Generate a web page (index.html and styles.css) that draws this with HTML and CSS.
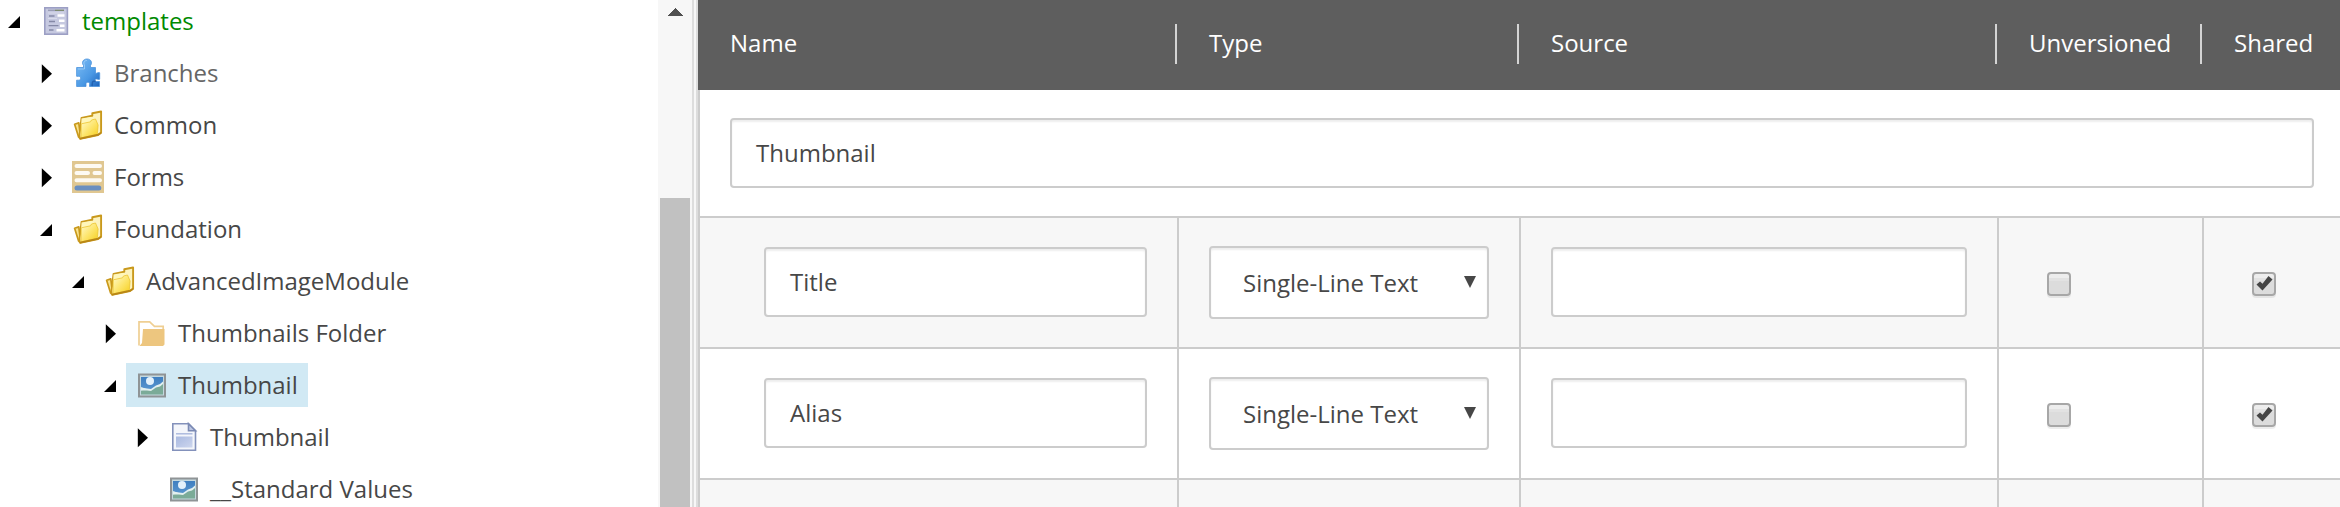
FILE: index.html
```html
<!DOCTYPE html>
<html lang="en">
<head>
<meta charset="utf-8">
<title>Template builder</title>
<link rel="stylesheet" href="styles.css">
</head>
<body>
<svg class="defs" aria-hidden="true">
  <defs>
    <linearGradient id="gBlue" x1="0" y1="0" x2="1" y2="1"><stop offset="0" stop-color="#7dbdf5"/><stop offset=".6" stop-color="#4a98e4"/><stop offset="1" stop-color="#1c63bd"/></linearGradient>
    <linearGradient id="gGold" x1="0" y1="0" x2="1" y2="1"><stop offset="0" stop-color="#fffbd0"/><stop offset=".5" stop-color="#fde670"/><stop offset="1" stop-color="#f6cf1c"/></linearGradient>
    <linearGradient id="gSky" x1="0" y1="0" x2="0" y2="1"><stop offset="0" stop-color="#3f7fc0"/><stop offset="1" stop-color="#5a97d0"/></linearGradient>
    <linearGradient id="gDoc" x1="0" y1="0" x2="1" y2="1"><stop offset="0" stop-color="#a9b9e0"/><stop offset="1" stop-color="#cdd6ee"/></linearGradient>
  </defs>
  <symbol id="template" viewBox="0 0 32 32">
    <rect x="4.8" y="2.8" width="22.6" height="26.4" fill="#c6c9e0" stroke="#9c9fc4" stroke-width="1.6"/>
    <path d="M8 5.3h7" stroke="#9a9db5" stroke-width="1.4"/><path d="M15 5.3h9" stroke="#7e8b70" stroke-width="1.4"/>
    <path d="M9 11h5.500M9 16.500h6M8.500 20.700h10M9 25h4.500" stroke="#8589a6" stroke-width="1.3"/>
    <path d="M17.500 10.500h7M19 15.700h5.500M20 20.700h4.500M16.500 25.300h8" stroke="#fff" stroke-width="2.6"/>
    <path d="M8 8h16M8 13.500h9" stroke="#d9dbea" stroke-width="1.2"/>
  </symbol>
  <symbol id="puzzle" viewBox="0 0 32 32">
    <path d="M4.600 10.500H11.500V8.500C9.300 5.800 10.800 2 15 2s5.700 3.800 3.500 6.500v2H23.500V16c1.500.8 2.500-1 4.200-.2v6.400c-1.700.8-2.700-.8-4.200 0-1 .8-.6 2.300.8 2.300h3.200v5H17.500v-2.200c1-2.800-4-2.800-3.500 0v2.200H4.600v-6.300h1.800c3 .6 3-4.400 0-3.900H4.600z" fill="url(#gBlue)" stroke="#4b93dc" stroke-width=".8"/>
    <path d="M6 12h6.500V8c-1.500-2.500 0-4.500 2.500-4.500" fill="none" stroke="#a8d4fb" stroke-width="1" opacity=".7"/>
    <path d="M20 29c1-4-1-4.500 4-5" fill="none" stroke="#15509f" stroke-width="1.500" opacity=".6"/>
  </symbol>
  <symbol id="folders" viewBox="0 0 32 32">
    <path d="M2.600 15.200l4.200-1.300L8.500 28 8 29.500 6.600 28z" fill="#fae58f" stroke="#c9991c" stroke-width="1.700" stroke-linejoin="round"/>
    <path d="M9.500 9l10.800-2.200V4.200l8.800-1.700V23.800L26 26 8.200 29.700 7.500 26z" fill="#fdf3bd" stroke="#c9991c" stroke-width="1.900" stroke-linejoin="round"/>
    <path d="M9.500 9.500L19.500 7.800l3.500 4 3 13.400L8.500 29z" fill="#fff7bb"/>
    <path d="M9.300 14.800l9.200-2 1-1.800 4-1 2.600 6-.8 9.500L9 28.800z" fill="url(#gGold)" stroke="#ecc531" stroke-width=".8"/>
    <path d="M8 29.600L26.200 25.700l2.800-2" fill="none" stroke="#b98716" stroke-width="1.900"/>
  </symbol>
  <symbol id="forms" viewBox="0 0 32 32">
    <rect width="32" height="32" fill="#e0c791"/>
    <path d="M4.500 5h23.500M4.500 12h11.500M22.500 12h5.500M4.500 19.200h23.500" stroke="#fdfaf3" stroke-width="4" stroke-linecap="round"/>
    <path d="M5 27h21.800" stroke="#6a8fc0" stroke-width="5" stroke-linecap="round"/>
  </symbol>
  <symbol id="folder" viewBox="0 0 32 32">
    <path d="M3 28.500V4.800h10.700l4.800 4.500h8.700V12" fill="#fff" stroke="#efcf93" stroke-width="1.700"/>
    <path d="M7 12h21.500v15.500l-1.500 1.500H3.500L6 26z" fill="#edc67f"/>
  </symbol>
  <symbol id="image" viewBox="0 0 32 32">
    <rect x="3" y="5.500" width="26" height="22" fill="#c4d8de" stroke="#8f9496" stroke-width="2"/>
    <path d="M5 8H27V15L15 22 5 18z" fill="url(#gSky)"/>
    <circle cx="14" cy="12" r="4" fill="#e3f1fb"/>
    <path d="M5 21.500l6-1.500 5 1 11-6.500V25.500H5z" fill="#7bab98"/>
    <path d="M5 18.500l6 1 4 .500 5-3.500 4-1.500 3-2.500v2.500l-3 2.500-4 1-5 3.500-4-.5H5z" fill="#e3f0ef"/>
  </symbol>
  <symbol id="document" viewBox="0 0 32 32">
    <path d="M4.800 2.800H20.500L27.500 9.800V29.200H4.800z" fill="#f4f6fb" stroke="#8391bb" stroke-width="1.600"/>
    <path d="M20.500 2.800V9.800H27.500z" fill="#bcc6e2" stroke="#7b8ab4" stroke-width="1.600"/>
    <path d="M8 12.800H24.500" stroke="#a9b7dc" stroke-width="1.400"/>
    <rect x="8" y="15.500" width="16.500" height="11" fill="url(#gDoc)"/>
  </symbol>
  <symbol id="open" viewBox="0 0 12 20"><path d="M12.500 3.500v12.500H0z"/></symbol>
  <symbol id="closed" viewBox="0 0 12 20"><path d="M1.800 .300L12 9.800 1.800 19.300z"/></symbol>
</svg>
<div class="app">
  <nav class="tree">
    <div class="node level-0"><svg class="toggle"><use href="#open"/></svg><span class="item"><svg class="icon"><use href="#template"/></svg><span class="label root">templates</span></span></div>
    <div class="node level-1"><svg class="toggle"><use href="#closed"/></svg><span class="item"><svg class="icon"><use href="#puzzle"/></svg><span class="label muted">Branches</span></span></div>
    <div class="node level-1"><svg class="toggle"><use href="#closed"/></svg><span class="item"><svg class="icon"><use href="#folders"/></svg><span class="label">Common</span></span></div>
    <div class="node level-1"><svg class="toggle"><use href="#closed"/></svg><span class="item"><svg class="icon"><use href="#forms"/></svg><span class="label">Forms</span></span></div>
    <div class="node level-1"><svg class="toggle"><use href="#open"/></svg><span class="item"><svg class="icon"><use href="#folders"/></svg><span class="label">Foundation</span></span></div>
    <div class="node level-2"><svg class="toggle"><use href="#open"/></svg><span class="item"><svg class="icon"><use href="#folders"/></svg><span class="label">AdvancedImageModule</span></span></div>
    <div class="node level-3"><svg class="toggle"><use href="#closed"/></svg><span class="item"><svg class="icon"><use href="#folder"/></svg><span class="label">Thumbnails Folder</span></span></div>
    <div class="node level-3"><svg class="toggle"><use href="#open"/></svg><span class="item selected"><svg class="icon"><use href="#image"/></svg><span class="label">Thumbnail</span></span></div>
    <div class="node level-4"><svg class="toggle"><use href="#closed"/></svg><span class="item"><svg class="icon"><use href="#document"/></svg><span class="label">Thumbnail</span></span></div>
    <div class="node level-4"><svg class="toggle"></svg><span class="item"><svg class="icon"><use href="#image"/></svg><span class="label">__Standard Values</span></span></div>
  </nav>
  <div class="scrollbar">
    <svg class="scroll-up" viewBox="0 0 16 8" shape-rendering="crispEdges"><path d="M8 0l8 8H0z"/></svg>
    <div class="thumb"></div>
  </div>
  <div class="splitter"></div>
  <main class="builder">
    <div class="head columns">
      <div class="th">Name</div><div class="th">Type</div><div class="th">Source</div><div class="th">Unversioned</div><div class="th">Shared</div>
    </div>
    <div class="section"><div class="field">Thumbnail</div></div>
    <div class="row columns shaded">
      <div class="td name"><div class="field">Title</div></div>
      <div class="td"><div class="field select"><span>Single-Line Text</span><svg class="caret" viewBox="0 0 12 12"><path d="M0 0h12L6 12z"/></svg></div></div>
      <div class="td"><div class="field"></div></div>
      <div class="td check"><span class="box"></span></div>
      <div class="td check"><span class="box"><svg class="tick" viewBox="0 0 20 20"><path d="M2.500 10.500l6 6L18.500 5.500 14.500 2 8.500 9.800 6 7.500z"/></svg></span></div>
    </div>
    <div class="row columns">
      <div class="td name"><div class="field">Alias</div></div>
      <div class="td"><div class="field select"><span>Single-Line Text</span><svg class="caret" viewBox="0 0 12 12"><path d="M0 0h12L6 12z"/></svg></div></div>
      <div class="td"><div class="field"></div></div>
      <div class="td check"><span class="box"></span></div>
      <div class="td check"><span class="box"><svg class="tick" viewBox="0 0 20 20"><path d="M2.500 10.500l6 6L18.500 5.500 14.500 2 8.500 9.800 6 7.500z"/></svg></span></div>
    </div>
    <div class="row columns shaded">
      <div class="td"></div><div class="td"></div><div class="td"></div><div class="td"></div><div class="td"></div>
    </div>
  </main>
</div>
</body>
</html>
```
FILE: styles.css
```css
* { box-sizing: border-box; }

body {
  margin: 0;
  overflow: hidden;
  background: #fff;
  color: #474747;
  font-family: "Open Sans", sans-serif;
  font-size: 24px;
}

svg { display: block; flex: none; }
.defs { position: absolute; width: 0; height: 0; }

.app { display: flex; height: 507px; overflow: hidden; }

/* Content tree */
.tree { width: 658px; margin-top: -5px; flex: none; }
.node { display: flex; align-items: center; height: 52px; padding-left: 8px; white-space: nowrap; }
.level-1 { padding-left: 40px; }
.level-2 { padding-left: 72px; }
.level-3 { padding-left: 104px; }
.level-4 { padding-left: 136px; }
.toggle { width: 12px; height: 20px; margin-top: 2px; overflow: visible; }
.item { display: flex; align-items: center; gap: 10px; height: 44px; margin: 0 0 1px 10px; padding: 1px 10px 0; }
.icon { width: 32px; height: 32px; }
.label { margin-bottom: 2px; }
.selected { background: #d1e9f4; }
.root { color: #008a00; }
.muted { color: #666; }

.scrollbar { width: 34px; flex: none; background: #f7f7f7; padding: 8px 2px 0; }
.scroll-up { width: 16px; height: 8px; margin: 0 0 182px 7px; fill: #505050; }
.thumb { height: 309px; background: #c1c1c1; }
.splitter { width: 6px; flex: none; background: #f7f7f7; border: solid #ddd; border-width: 0 2px; }

/* Field table */
.builder { width: 1642px; flex: none; }
.columns { display: grid; grid-template-columns: 479px 342px 478px 205px 138px; }
.head { height: 90px; padding-top: 24px; background: #5e5e5e; color: #fff; }
.th { height: 40px; padding-left: 32px; line-height: 37px; box-shadow: -2px 0 #d4d4d4; }
.th:first-child { box-shadow: none; }
.section { height: 126px; padding: 28px 26px 28px 30px; border-left: 2px solid #ccc; }
.row { height: 131px; }
.shaded .td { background: #f7f7f7; }
.td { padding: 29px 30px; border: solid #ccc; border-width: 2px 0 0 2px; }
.td.name { padding-left: 64px; }
.field {
  display: flex;
  align-items: center;
  height: 70px;
  padding: 0 24px 2px;
  border: 2px solid #ccc;
  border-radius: 4px;
  background: #fff;
  box-shadow: inset 0 2px 2px rgba(0, 0, 0, .07);
}
.select { height: 73px; margin-top: -1px; padding: 0 11px 0 32px; justify-content: space-between; }
.caret { width: 12px; height: 12px; margin-bottom: 1px; fill: #474747; }
.td.check { padding: 54px 0 0 48px; }
.box {
  display: block;
  width: 24px;
  height: 24px;
  border: 2px solid #a7a7a7;
  border-radius: 4px;
  background: linear-gradient(#ededed 0 4px, #e2e2e2 4px 7px, #dcdcdc 7px);
  box-shadow: 0 2px rgba(0, 0, 0, .07);
}
.tick { width: 20px; height: 20px; fill: #454545; }
```
